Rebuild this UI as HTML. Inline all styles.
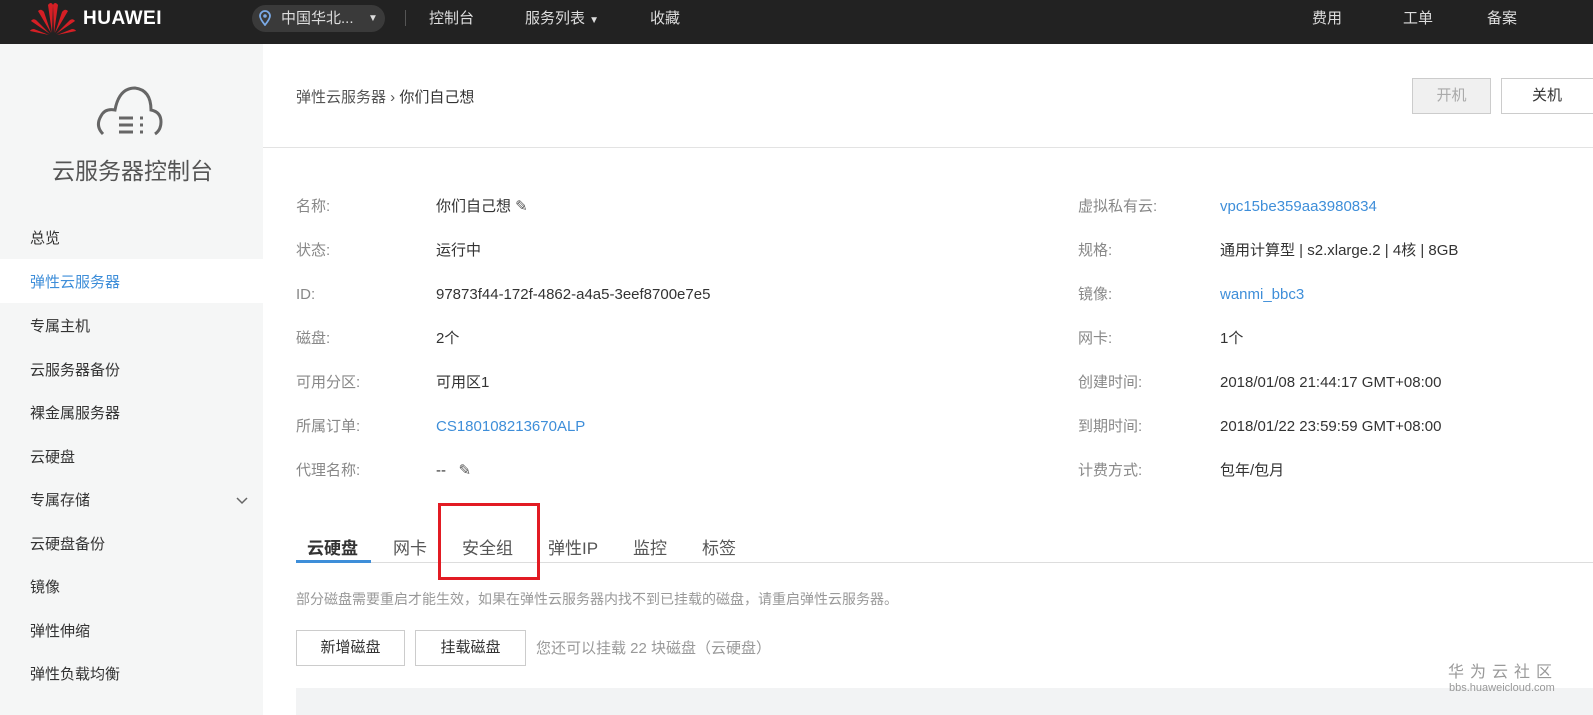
<!DOCTYPE html>
<html><head><meta charset="utf-8"><style>
*{margin:0;padding:0;box-sizing:border-box}
body{width:1593px;height:715px;overflow:hidden;background:#fff;font-family:"Liberation Sans","Noto Sans CJK SC",sans-serif;color:#333;position:relative}
.a{position:absolute;white-space:nowrap;line-height:20px}
.nav{position:absolute;left:0;top:0;width:1593px;height:44px;background:#222}
.nav .a{color:#ddd;font-size:15px;top:9px}
.side{position:absolute;left:0;top:44px;width:263px;height:671px;background:#f5f6f6}
.side .it{position:absolute;left:30px;font-size:15px;color:#333;line-height:20px}
.side .it.sel{color:#3e8ed9}
.lb{color:#888;font-size:15px}
.v{color:#333;font-size:15px}
.blue{color:#3e8ed9}
.btn{position:absolute;border:1px solid #ccc;background:#fff;font-size:15px;text-align:center;color:#333}
</style></head><body>
<div class="nav">
<svg class="a" style="left:28px;top:1px" width="50" height="34" viewBox="0 0 50 34">
<g fill="#d51f25">
<path d="M24 32 L20 4 Q23 0 25 4 Z"/><path d="M26 32 L30 4 Q27 0 25 4 Z"/>
<path d="M23 32 L10 10 Q13 7 16 11 Z"/><path d="M27 32 L40 10 Q37 7 34 11 Z"/>
<path d="M22 33 L3 20 Q5 17 8 19 Z"/><path d="M28 33 L47 20 Q45 17 42 19 Z"/>
<path d="M21 34 L2 30 Q3 28 6 28 Z"/><path d="M29 34 L48 30 Q47 28 44 28 Z"/>
</g></svg>
<div class="a" style="left:83px;top:9px;color:#fff;font-weight:bold;font-size:19px;letter-spacing:0.5px">HUAWEI</div>
<div class="a" style="left:252px;top:5px;width:133px;height:27px;border-radius:14px;background:#3a3a3a"></div>
<svg class="a" style="left:259px;top:10px" width="12" height="16" viewBox="0 0 12 16"><path d="M6 15 C2 10 1 8 1 6 A5 5 0 0 1 11 6 C11 8 10 10 6 15Z" fill="none" stroke="#7aa9e6" stroke-width="1.8"/><circle cx="6" cy="6" r="1.8" fill="#7aa9e6"/></svg>
<div class="a" style="left:281px;top:9px;font-size:15px">中国华北...</div>
<div class="a" style="left:368px;top:9px;font-size:10px">▼</div>
<div class="a" style="left:405px;top:10px;width:1px;height:16px;background:#555"></div>
<div class="a" style="left:429px">控制台</div>
<div class="a" style="left:525px">服务列表 <span style="font-size:10px">▼</span></div>
<div class="a" style="left:650px">收藏</div>
<div class="a" style="left:1312px">费用</div>
<div class="a" style="left:1403px">工单</div>
<div class="a" style="left:1487px">备案</div>
</div>
<div class="side">
<svg class="a" style="left:95px;top:42px" width="70" height="50" viewBox="0 0 70 50" fill="none" stroke="#666" stroke-width="3">
<path d="M8 48 Q0 40 6 30 Q10 22 20 24 Q24 2 40 2 Q56 4 56 24 Q66 26 66 36 Q66 44 60 48"/>
<path d="M24 32 H38 M24 39 H38 M24 46 H38"/><path d="M45 32 h3 M45 39 h3 M45 46 h3"/>
</svg>
<div class="a" style="left:52px;top:112px;font-size:23px;line-height:30px;color:#555">云服务器控制台</div>
<div class="a" style="left:0;top:215px;width:263px;height:44px;background:#fff"></div>
<div class="it" style="top:185px">总览</div>
<div class="it sel" style="top:229px">弹性云服务器</div>
<div class="it" style="top:273px">专属主机</div>
<div class="it" style="top:317px">云服务器备份</div>
<div class="it" style="top:360px">裸金属服务器</div>
<div class="it" style="top:404px">云硬盘</div>
<div class="it" style="top:447px">专属存储</div>
<svg class="a" style="left:236px;top:453px" width="12" height="8" viewBox="0 0 12 8"><path d="M1 1 L6 6 L11 1" fill="none" stroke="#666" stroke-width="1.5"/></svg>
<div class="it" style="top:491px">云硬盘备份</div>
<div class="it" style="top:534px">镜像</div>
<div class="it" style="top:578px">弹性伸缩</div>
<div class="it" style="top:621px">弹性负载均衡</div>
</div>
<div class="a" style="left:296px;top:88px;font-size:15px;color:#555">弹性云服务器 › <span style="color:#333">你们自己想</span></div>
<div class="btn" style="left:1412px;top:78px;width:79px;height:36px;line-height:34px;background:#f0f0f0;color:#aaa">开机</div>
<div class="btn" style="left:1501px;top:78px;width:100px;height:36px;line-height:34px;padding-right:8px">关机</div>
<div class="a" style="left:263px;top:147px;width:1330px;height:1px;background:#e3e3e3"></div>

<div class="a lb" style="left:296px;top:197px">名称:</div><div class="a v" style="left:436px;top:197px">你们自己想 <span style="color:#555">&#9998;</span></div>
<div class="a lb" style="left:296px;top:241px">状态:</div><div class="a v" style="left:436px;top:241px">运行中</div>
<div class="a lb" style="left:296px;top:285px">ID:</div><div class="a v" style="left:436px;top:285px">97873f44-172f-4862-a4a5-3eef8700e7e5</div>
<div class="a lb" style="left:296px;top:329px">磁盘:</div><div class="a v" style="left:436px;top:329px">2个</div>
<div class="a lb" style="left:296px;top:373px">可用分区:</div><div class="a v" style="left:436px;top:373px">可用区1</div>
<div class="a lb" style="left:296px;top:417px">所属订单:</div><div class="a v blue" style="left:436px;top:417px">CS180108213670ALP</div>
<div class="a lb" style="left:296px;top:461px">代理名称:</div><div class="a v" style="left:436px;top:461px">--&nbsp;&nbsp; <span style="color:#555">&#9998;</span></div>

<div class="a lb" style="left:1078px;top:197px">虚拟私有云:</div><div class="a v blue" style="left:1220px;top:197px">vpc15be359aa3980834</div>
<div class="a lb" style="left:1078px;top:241px">规格:</div><div class="a v" style="left:1220px;top:241px">通用计算型 | s2.xlarge.2 | 4核 | 8GB</div>
<div class="a lb" style="left:1078px;top:285px">镜像:</div><div class="a v blue" style="left:1220px;top:285px">wanmi_bbc3</div>
<div class="a lb" style="left:1078px;top:329px">网卡:</div><div class="a v" style="left:1220px;top:329px">1个</div>
<div class="a lb" style="left:1078px;top:373px">创建时间:</div><div class="a v" style="left:1220px;top:373px">2018/01/08 21:44:17 GMT+08:00</div>
<div class="a lb" style="left:1078px;top:417px">到期时间:</div><div class="a v" style="left:1220px;top:417px">2018/01/22 23:59:59 GMT+08:00</div>
<div class="a lb" style="left:1078px;top:461px">计费方式:</div><div class="a v" style="left:1220px;top:461px">包年/包月</div>

<div class="a" style="left:296px;top:562px;width:1297px;height:1px;background:#ddd"></div>
<div class="a" style="left:296px;top:560px;width:75px;height:3px;background:#3e8ed9"></div>
<div class="a" style="left:307px;top:538px;font-size:17px;line-height:22px;font-weight:bold;color:#333">云硬盘</div>
<div class="a" style="left:393px;top:538px;font-size:17px;line-height:22px;color:#555">网卡</div>
<div class="a" style="left:462px;top:538px;font-size:17px;line-height:22px;color:#555">安全组</div>
<div class="a" style="left:548px;top:538px;font-size:17px;line-height:22px;color:#555">弹性IP</div>
<div class="a" style="left:633px;top:538px;font-size:17px;line-height:22px;color:#555">监控</div>
<div class="a" style="left:702px;top:538px;font-size:17px;line-height:22px;color:#555">标签</div>
<div class="a" style="left:438px;top:503px;width:102px;height:77px;border:3px solid #e21b23"></div>

<div class="a" style="left:296px;top:589px;font-size:14px;color:#999">部分磁盘需要重启才能生效，如果在弹性云服务器内找不到已挂载的磁盘，请重启弹性云服务器。</div>
<div class="btn" style="left:296px;top:630px;width:109px;height:36px;line-height:34px">新增磁盘</div>
<div class="btn" style="left:415px;top:630px;width:111px;height:36px;line-height:34px">挂载磁盘</div>
<div class="a" style="left:536px;top:639px;font-size:15px;color:#999">您还可以挂载 22 块磁盘（云硬盘）</div>
<div class="a" style="left:296px;top:688px;width:1297px;height:27px;background:#f2f3f4"></div>
<div class="a" style="left:1448px;top:663px;font-size:16px;color:#999;letter-spacing:6px">华为云社区</div>
<div class="a" style="left:1449px;top:682px;font-size:11px;line-height:13px;color:#999">bbs.huaweicloud.com</div>
</body></html>
